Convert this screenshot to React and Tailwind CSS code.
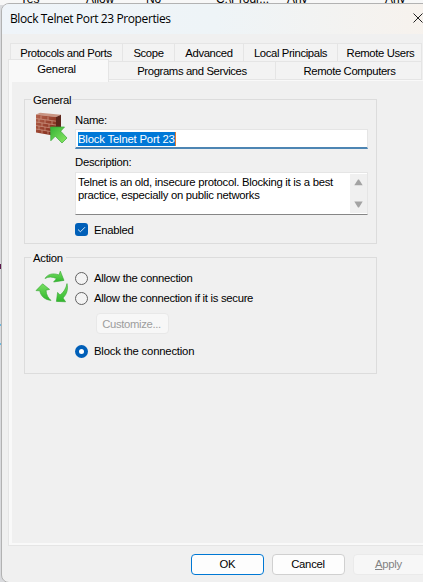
function Group({ title, titleWidth, className, children }) {
  return (
    <section className={`relative ml-[12px] w-[353px] border border-[#dcdcdc] ${className}`}>
      <h2 className={`absolute -top-[8px] left-[6px] h-[16px] whitespace-nowrap bg-[#f0f0f0] pl-[2px] leading-[16px] ${titleWidth}`}>{title}</h2>
      {children}
    </section>
  );
}

function Tab({ className, children }) {
  return (
    <div className={`shrink-0 whitespace-nowrap border-l border-t border-[#e5e5e5] bg-[#f3f3f3] text-center ${className}`}>
      {children}
    </div>
  );
}

function Radio({ label, checked, className }) {
  return (
    <div className={`flex h-[20px] items-center ${className}`}>
      <span
        className={`flex size-[13px] shrink-0 items-center justify-center rounded-full ${
          checked ? "bg-[#005fb8]" : "border border-[#626262] bg-[#f3f3f3]"
        }`}
      >
        {checked && <span className="size-[5px] rounded-full bg-white" />}
      </span>
      <span className="ml-[6px] whitespace-nowrap">{label}</span>
    </div>
  );
}

function FirewallIcon() {
  return (
    <svg className="block h-[34px] w-[34px]" viewBox="0 0 34 34">
      <defs>
        <linearGradient id="brick" x1="0" y1="0" x2="1" y2="1">
          <stop offset="0" stopColor="#b5654f" />
          <stop offset="0.6" stopColor="#933c29" />
          <stop offset="1" stopColor="#702417" />
        </linearGradient>
        <linearGradient id="arrow" x1="0" y1="0" x2="1" y2="1">
          <stop offset="0" stopColor="#36b236" />
          <stop offset="1" stopColor="#8bea63" />
        </linearGradient>
      </defs>
      <path d="M1 2.5L5 .8L26 2.8L21 5Z" fill="#c99583" />
      <path d="M21 5L26 2.8V21L21 24Z" fill="#5f261b" />
      <path d="M1 2.5L21 5V24L1 20.5Z" fill="url(#brick)" />
      <path
        d="M1 6.5L21 9.2M1 10L21 13M1 13.5L21 16.8M1 17L21 20.4M6 3.4V7.2M13 4.3V8.2M4 7V10.4M10 7.8V11.3M17 8.8V12.2M7 11V14.4M14 12V15.5M4 14V17.4M10 15V18.4M17 16V19.6M7 18V21.2M13 19V22.4"
        stroke="#cf9b88"
        strokeWidth=".7"
        fill="none"
      />
      <path d="M15.5 15H29.5L25.7 19.2L32 26L27 31L20.3 24.2L15.8 28.8Z" fill="url(#arrow)" stroke="#3ba83a" strokeWidth=".7" />
    </svg>
  );
}

function CycleIcon() {
  return (
    <svg className="block h-[34px] w-[34px]" viewBox="0 0 34 34">
      <defs>
        <linearGradient id="leaf" x1="0" y1="0" x2="0" y2="1">
          <stop offset="0" stopColor="#78df62" />
          <stop offset="1" stopColor="#30b72d" />
        </linearGradient>
      </defs>
      <g fill="url(#leaf)" stroke="#31a52e" strokeWidth=".6" strokeLinejoin="round">
        <path d="M10 9.5C12.5 5.2 18 3.6 24 6L25.3 2.2L29 11.4L18.6 13L21.5 9.6C17.5 7.6 13.5 7.6 10 9.5Z" />
        <path d="M7.6 14.8L14.6 20.4L11 21.2C11.3 26 13.2 29 16 31.4C10 30.8 5.8 27.4 4.8 21.8L1 21.6Z" />
        <path d="M32 14.6C33.4 20.5 31.6 25.6 28 29L30.6 32.8L21.4 32.4L22.6 23.4L25 26C28.8 23.4 31 19.4 32 14.6Z" />
      </g>
    </svg>
  );
}

export default function App() {
  return (
    <div className="relative h-[582px] w-[423px] overflow-hidden bg-[#d9dadd] font-['Liberation_Sans',Arial,sans-serif] text-[11.3px] leading-[13px] tracking-[-0.27px] text-black">
      <div className="absolute inset-x-0 top-0 h-[5px] overflow-hidden bg-[#f7f7f7]">
        <div className="-mt-[7px] flex whitespace-nowrap text-[12px] leading-[13px] tracking-[-0.1px]">
          <span className="ml-[20px] w-[66px]">Yes</span>
          <span className="w-[60px]">Allow</span>
          <span className="w-[70px]">No</span>
          <span className="w-[71px]">C:\Progr...</span>
          <span className="w-[98px]">Any</span>
          <span>Any</span>
        </div>
      </div>
      <div className="absolute left-0 top-[264px] h-[5px] w-[1px] bg-[#5c174c]" />
      <div className="absolute left-0 top-[324px] h-[2px] w-[1px] bg-[#6bb8df]" />
      <div className="absolute left-0 top-[343px] h-[2px] w-[1px] bg-[#6bb8df]" />

      <main className="absolute left-[1px] top-[3px] flex h-[580px] w-[430px] flex-col overflow-hidden rounded-[8px] border border-[#b2b2b2] bg-[#f0f0f0]">
        <header className="flex h-[30px] shrink-0 items-center bg-linear-to-r from-[#eff4f9] via-[#eef4f7] to-[#f7f2ed]">
          <h1 className="-mt-px ml-[8px] w-[403px] whitespace-nowrap font-['Open_Sans',sans-serif] text-[12px] tracking-[-0.39px]">
            Block Telnet Port 23 Properties
          </h1>
          <svg className="-mt-[2px] h-[10px] w-[10px] shrink-0" viewBox="0 0 10 10">
            <path d="M.5 .5L9.5 9.5M9.5 .5L.5 9.5" stroke="#222" strokeWidth="1" />
          </svg>
        </header>

        <nav className="mt-[9px] shrink-0 tracking-[-0.37px]">
          <div className="ml-[8px] flex h-[18px] leading-[19px]">
            <Tab className="w-[112px] pr-px">Protocols and Ports</Tab>
            <Tab className="w-[52px]">Scope</Tab>
            <Tab className="w-[69px]">Advanced</Tab>
            <Tab className="w-[94px]">Local Principals</Tab>
            <Tab className="w-[85px] border-r pl-[2px]">Remote Users</Tab>
          </div>
          <div className="ml-[6px] flex h-[19px] items-start leading-[18px]">
            <Tab className="relative z-10 -mt-[2px] h-[23px] w-[101px] border-r bg-[#f9f9f9] pt-px pr-[4px] leading-[17px] tracking-[-0.27px]">General</Tab>
            <Tab className="h-[19px] w-[166px] border-b border-l-0">Programs and Services</Tab>
            <Tab className="h-[19px] w-[147px] border-x border-b pl-[2px]">Remote Computers</Tab>
          </div>
        </nav>

        <div className="ml-[6px] h-[466px] w-[430px] shrink-0 border border-t-0 border-[#e5e5e5] bg-[#f9f9f9] pb-[2px] pl-[3px] pt-px">
          <div className="h-full bg-[#f0f0f0] pt-[18px]">
            <Group title="General" titleWidth="w-[41px]" className="h-[145px]">
              <div className="flex">
                <div className="ml-[10px] mt-[12px] w-[40px] shrink-0"><FirewallIcon /></div>
                <div className="w-[293px] shrink-0 pt-[13px]">
                  <div className="h-[16px] leading-[15px]">Name:</div>
                  <div className="flex h-[20px] items-center border border-b-2 border-[#e5e5e5] border-b-[#4d85b3] bg-white pl-[2px]">
                    <span className="h-[14px] w-[98px] whitespace-nowrap border-r border-[#e37a2e] bg-[#0078d7] leading-[14px] tracking-[-0.18px] text-white">Block Telnet Port 23</span>
                  </div>
                  <div className="mt-[6px] h-[17px] leading-[15px]">Description:</div>
                  <div className="flex h-[43px] justify-between border border-[#e5e5e5] border-b-[#868686] bg-white p-px pr-0">
                    <p className="whitespace-nowrap pl-[1px] pt-[2px]">
                      Telnet is an old, insecure protocol. Blocking it is a best
                      <br />
                      practice, especially on public networks
                    </p>
                    <div className="flex h-[39px] w-[17px] shrink-0 flex-col items-center justify-between bg-[#f0f0f0] py-[5px]">
                      <svg className="h-[7px] w-[9px]" viewBox="0 0 9 7"><path d="M4 .5H5L8.7 6.3H.3Z" fill="#a3a3a3" /></svg>
                      <svg className="h-[7px] w-[9px]" viewBox="0 0 9 7"><path d="M.3 .5H8.7L5 6.5H4Z" fill="#a3a3a3" /></svg>
                    </div>
                  </div>
                  <div className="mt-[8px] flex h-[13px] items-center">
                    <span className="flex size-[13px] items-center justify-center rounded-[3px] bg-[#005fb8]">
                      <svg className="size-[9px]" viewBox="0 0 9 9"><path d="M1 4.5L3.4 6.8L8 2.2" fill="none" stroke="#d7e8f5" strokeWidth="1" /></svg>
                    </span>
                    <span className="ml-[6px] pt-px">Enabled</span>
                  </div>
                </div>
              </div>
            </Group>

            <Group title="Action" titleWidth="w-[35px]" className="mt-[13px] h-[117px]">
              <div className="flex">
                <div className="ml-[10px] mt-[11px] w-[40px] shrink-0"><CycleIcon /></div>
                <div className="pt-[10px] tracking-[-0.25px]">
                  <Radio label="Allow the connection" />
                  <Radio label="Allow the connection if it is secure" className="tracking-[-0.29px]" />
                  <button className="ml-[21px] mt-[5px] block h-[21px] w-[73px] rounded-[4px] border border-[#e8e8e8] bg-[#f7f7f7] pr-[2px] text-center leading-[20px] tracking-[-0.35px] text-[#9d9d9d]">
                    Customize...
                  </button>
                  <Radio label="Block the connection" checked className="mt-[7px] tracking-[-0.2px]" />
                </div>
              </div>
            </Group>
          </div>
        </div>

        <footer className="ml-[189px] mt-[8px] flex shrink-0 gap-[8px] leading-[19px]">
          <button className="h-[21px] w-[73px] rounded-[4px] border border-[#0078d4] bg-[#fdfdfd]">OK</button>
          <button className="h-[21px] w-[73px] rounded-[4px] border border-[#d0d0d0] bg-[#fdfdfd] pr-px">Cancel</button>
          <button className="h-[21px] w-[73px] shrink-0 rounded-[4px] border border-[#eaeaea] bg-[#f7f7f7] pr-[2px] text-[#838383]">
            <span className="underline">A</span>pply
          </button>
        </footer>
      </main>
    </div>
  );
}
